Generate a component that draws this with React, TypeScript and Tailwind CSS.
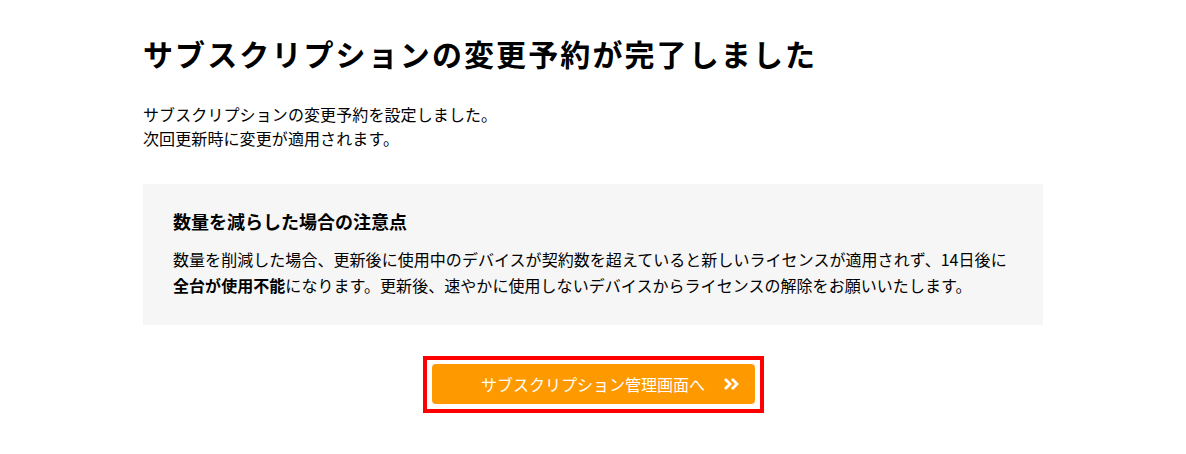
import React from "react";

export default function App() {
  const font = { fontFamily: '"Noto Sans CJK JP", "Noto Sans", sans-serif' };
  return (
    <div className="min-h-[454px] bg-white text-black" style={font}>
      <div className="mx-auto w-[900px] pt-[31px]">
        <h1 className="text-[30px] font-bold leading-[45px] tracking-[2.1px]">
          サブスクリプションの変更予約が完了しました
        </h1>
        <p className="mt-[26px] text-[16px] leading-[24px] tracking-[0.1px]">
          サブスクリプションの変更予約を設定しました。
          <br />
          次回更新時に変更が適用されます。
        </p>
        <div className="mt-[34px] bg-[#f6f6f6] px-[30px] pt-[24px] pb-[27px]">
          <h2 className="text-[18px] font-bold leading-[27px]">数量を減らした場合の注意点</h2>
          <p className="mt-[11px] text-[16px] leading-[26px] tracking-[0.05px]">
            数量を削減した場合、更新後に使用中のデバイスが契約数を超えていると新しいライセンスが適用されず、14日後に
            <br />
            <span className="font-bold">全台が使用不能</span>
            になります。更新後、速やかに使用しないデバイスからライセンスの解除をお願いいたします。
          </p>
        </div>
        <div className="mt-[31px] flex justify-center">
          <div className="border-4 border-[#ff0000] px-[5px] pt-[4px] pb-[5px]">
            <a
              href="#"
              className="relative flex h-[40px] w-[323px] items-center justify-center rounded-[4px] bg-[#ff9900] text-[16px] text-white"
            >
              サブスクリプション管理画面へ
              <svg
                className="absolute right-[16px] top-1/2 -translate-y-1/2"
                width="16"
                height="14"
                viewBox="0 0 16 14"
                fill="none"
                stroke="white"
                strokeWidth="2.8"
                strokeLinecap="butt"
                strokeLinejoin="miter"
              >
                <path d="M2 2l5 5-5 5" />
                <path d="M9 2l5 5-5 5" />
              </svg>
            </a>
          </div>
        </div>
      </div>
    </div>
  );
}
